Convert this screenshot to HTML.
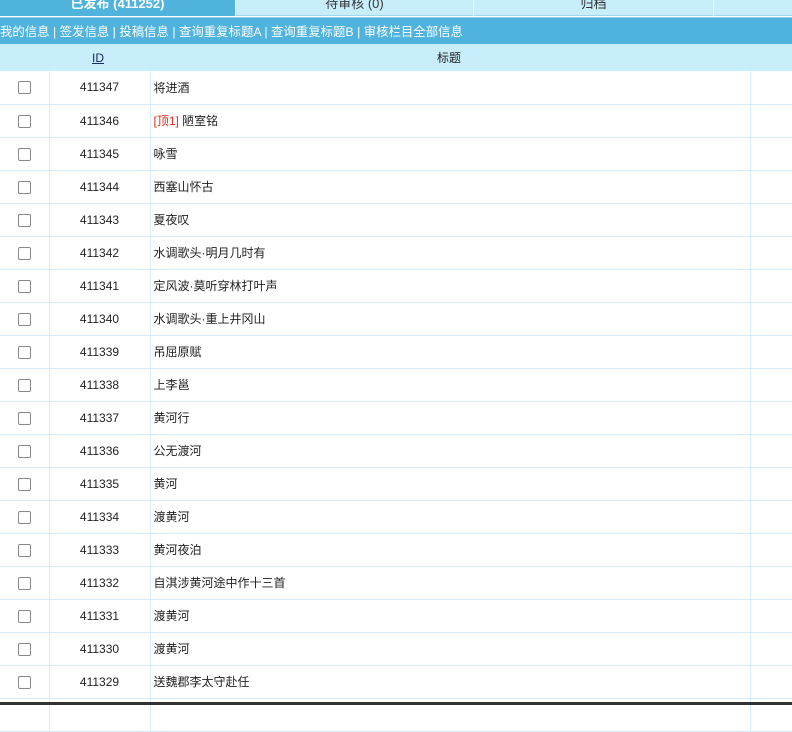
<!DOCTYPE html>
<html><head><meta charset="utf-8"><style>
*{margin:0;padding:0;box-sizing:border-box}
body{width:792px;height:705px;overflow:hidden;background:#fff;font-family:"Liberation Sans","Noto Sans CJK SC",sans-serif;font-size:12px;color:#222;position:relative}
.tabs{position:absolute;top:0;left:0;width:792px;height:16px;background:#c8eefc;border-bottom:1px solid #9fd6ee}
.tab{position:absolute;top:0;height:16px;text-align:center;line-height:8px;font-size:13px;color:#333;overflow:hidden;border-right:1px solid #e6f7fd}
.tab.a{background:#4fb3dc;color:#fff;font-weight:bold}
.nav{position:absolute;top:17px;left:0;width:792px;height:27px;background:#4fb3de;color:#fff;line-height:28px;font-size:12.4px;white-space:nowrap;border-top:1px solid #8ccfea}
.hdr{position:absolute;top:44px;left:0;width:792px;height:27px;background:#c9eefb;line-height:28px}
table{position:absolute;top:71px;left:0;border-collapse:collapse;width:792px;table-layout:fixed}
td{height:33px;border-bottom:1px solid #d3eef9;border-right:1px solid #d3eef9;font-size:12px}
td.c{text-align:center}
td.i{text-align:center}
td.t{padding-left:3px}
td.l{border-right:none}
.cb{display:inline-block;width:13px;height:13px;border:1px solid #888;border-radius:2px;vertical-align:middle;background:#fff}
.red{color:#e03020}
.bot{position:absolute;top:702px;left:0;width:792px;height:3px;background:#333}
</style></head><body>
<div class="tabs">
<div class="tab a" style="left:0;width:236px">已发布 (411252)</div>
<div class="tab" style="left:236px;width:238px">待审核 (0)</div>
<div class="tab" style="left:474px;width:240px">归档</div>
</div>
<div class="nav">我的信息 | 签发信息 | 投稿信息 | 查询重复标题A | 查询重复标题B | 审核栏目全部信息</div>
<div class="hdr"><span style="position:absolute;left:92px;text-decoration:underline;color:#1a2a6a">ID</span><span style="position:absolute;left:437px">标题</span></div>
<table>
<colgroup><col style="width:49px"><col style="width:101px"><col style="width:600px"><col></colgroup>
<tr><td class="c"><span class="cb"></span></td><td class="i">411347</td><td class="t">将进酒</td><td class="l"></td></tr>
<tr><td class="c"><span class="cb"></span></td><td class="i">411346</td><td class="t"><span class="red">[顶1]</span> 陋室铭</td><td class="l"></td></tr>
<tr><td class="c"><span class="cb"></span></td><td class="i">411345</td><td class="t">咏雪</td><td class="l"></td></tr>
<tr><td class="c"><span class="cb"></span></td><td class="i">411344</td><td class="t">西塞山怀古</td><td class="l"></td></tr>
<tr><td class="c"><span class="cb"></span></td><td class="i">411343</td><td class="t">夏夜叹</td><td class="l"></td></tr>
<tr><td class="c"><span class="cb"></span></td><td class="i">411342</td><td class="t">水调歌头·明月几时有</td><td class="l"></td></tr>
<tr><td class="c"><span class="cb"></span></td><td class="i">411341</td><td class="t">定风波·莫听穿林打叶声</td><td class="l"></td></tr>
<tr><td class="c"><span class="cb"></span></td><td class="i">411340</td><td class="t">水调歌头·重上井冈山</td><td class="l"></td></tr>
<tr><td class="c"><span class="cb"></span></td><td class="i">411339</td><td class="t">吊屈原赋</td><td class="l"></td></tr>
<tr><td class="c"><span class="cb"></span></td><td class="i">411338</td><td class="t">上李邕</td><td class="l"></td></tr>
<tr><td class="c"><span class="cb"></span></td><td class="i">411337</td><td class="t">黄河行</td><td class="l"></td></tr>
<tr><td class="c"><span class="cb"></span></td><td class="i">411336</td><td class="t">公无渡河</td><td class="l"></td></tr>
<tr><td class="c"><span class="cb"></span></td><td class="i">411335</td><td class="t">黄河</td><td class="l"></td></tr>
<tr><td class="c"><span class="cb"></span></td><td class="i">411334</td><td class="t">渡黄河</td><td class="l"></td></tr>
<tr><td class="c"><span class="cb"></span></td><td class="i">411333</td><td class="t">黄河夜泊</td><td class="l"></td></tr>
<tr><td class="c"><span class="cb"></span></td><td class="i">411332</td><td class="t">自淇涉黄河途中作十三首</td><td class="l"></td></tr>
<tr><td class="c"><span class="cb"></span></td><td class="i">411331</td><td class="t">渡黄河</td><td class="l"></td></tr>
<tr><td class="c"><span class="cb"></span></td><td class="i">411330</td><td class="t">渡黄河</td><td class="l"></td></tr>
<tr><td class="c"><span class="cb"></span></td><td class="i">411329</td><td class="t">送魏郡李太守赴任</td><td class="l"></td></tr>
<tr><td class="c"></td><td class="i"></td><td class="t"></td><td class="l"></td></tr>
</table>
<div class="bot"></div>
</body></html>
